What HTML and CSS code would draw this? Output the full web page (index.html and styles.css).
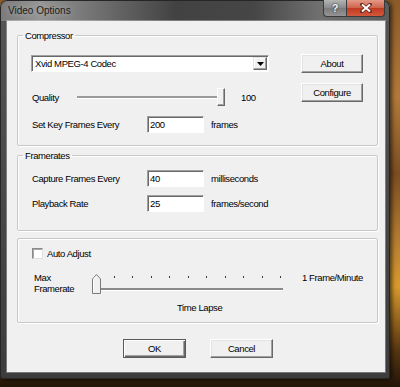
FILE: index.html
```html
<!DOCTYPE html>
<html lang="en">
<head>
  <meta charset="UTF-8">
  <meta name="viewport" content="width=device-width, initial-scale=1.0">
  <title>Video Options</title>
  <link rel="stylesheet" href="styles.css">
</head>
<body>
  <div class="window">
    <!-- Title bar -->
    <div class="titlebar">
      <span class="title">Video Options</span>
      <div class="caption-buttons">
        <span class="cap-btn cap-help">?</span>
        <span class="cap-btn cap-close">
          <svg width="12" height="10" viewBox="0 0 12 10">
            <path d="M2 1.5L10 8.5M10 1.5L2 8.5" stroke="#6a2a1c" stroke-width="3.6" stroke-linecap="square"/>
            <path d="M2 1.5L10 8.5M10 1.5L2 8.5" stroke="#fff" stroke-width="2"/>
          </svg>
        </span>
      </div>
    </div>

    <div class="client">
      <!-- Compressor -->
      <fieldset class="group">
        <legend>Compressor</legend>
        <div class="compressor">
          <div class="compressor-main">
            <div class="combo">
              <span class="combo-text">Xvid MPEG-4 Codec</span>
              <span class="combo-arrow">
                <svg width="7" height="4" viewBox="0 0 7 4"><path d="M0 0H7L3.5 4Z" fill="#000"/></svg>
              </span>
            </div>
            <div class="row row-quality">
              <span class="label label-quality">Quality</span>
              <div class="trackbar">
                <div class="groove"></div>
                <div class="thumb"></div>
              </div>
              <span class="value">100</span>
            </div>
            <div class="row row-field row-keyframes">
              <span class="label label-field">Set Key Frames Every</span>
              <input class="edit" type="text" value="200">
              <span class="unit">frames</span>
            </div>
          </div>
          <div class="compressor-buttons">
            <button class="btn" type="button">About</button>
            <button class="btn" type="button">Configure</button>
          </div>
        </div>
      </fieldset>

      <!-- Framerates -->
      <fieldset class="group group-rates">
        <legend>Framerates</legend>
        <div class="rates">
          <div class="row row-field">
            <span class="label label-field">Capture Frames Every</span>
            <input class="edit" type="text" value="40">
            <span class="unit">milliseconds</span>
          </div>
          <div class="row row-field">
            <span class="label label-field">Playback Rate</span>
            <input class="edit" type="text" value="25">
            <span class="unit">frames/second</span>
          </div>
        </div>
      </fieldset>

      <!-- Auto adjust -->
      <fieldset class="group group-adjust">
        <div class="adjust">
          <div class="check-row">
            <span class="check"></span>
            <span>Auto Adjust</span>
          </div>
          <div class="max-row">
            <div class="max-label">
              <div>Max</div>
              <div>Framerate</div>
            </div>
            <div class="slider">
              <div class="ticks">
                <span class="tick tick-first"></span>
                <span class="tick"></span>
                <span class="tick"></span>
                <span class="tick"></span>
                <span class="tick"></span>
                <span class="tick"></span>
                <span class="tick"></span>
                <span class="tick"></span>
                <span class="tick"></span>
                <span class="tick"></span>
                <span class="tick"></span>
              </div>
              <div class="slider-groove"></div>
              <svg class="slider-thumb" width="9" height="20" viewBox="0 0 9 20">
                <path d="M0.5 19.5V5L4.5 0.5L8.5 5V19.5Z" fill="#f0f0f0" stroke="#7a7a7a"/>
                <path d="M1.5 18.5V5.4L4.5 2" stroke="#fff" fill="none"/>
              </svg>
            </div>
            <span class="max-value">1 Frame/Minute</span>
          </div>
          <div class="lapse">Time Lapse</div>
        </div>
      </fieldset>

      <!-- Dialog buttons -->
      <div class="dialog-buttons">
        <button class="btn btn-default" type="button">OK</button>
        <button class="btn" type="button">Cancel</button>
      </div>
    </div>
  </div>
</body>
</html>
```

FILE: styles.css
```css
body {
  margin: 0;
  width: 400px;
  height: 387px;
  overflow: hidden;
  font-family: "Liberation Sans", Arial, sans-serif;
  font-size: 9.5px;
  letter-spacing: -0.4px;
  color: #000;
  background: linear-gradient(to bottom, #8a5a28 0%, #b27a3a 25%, #7a4e22 45%, #b47c30 62%, #d89a2c 74%, #5a3812 90%, #221508 100%);
}

.window {
  width: 390px;
  height: 379px;
  box-sizing: border-box;
  padding: 0 5px 7px 7px;
  display: flex;
  flex-direction: column;
  border-radius: 7px 7px 3px 3px;
  background:
    linear-gradient(to right, #7a7a7a 0%, #959595 10%, #707070 25%, #424242 45%, #464646 65%, #707070 82%, #5c5c5c 100%) top / 100% 21px no-repeat,
    linear-gradient(to bottom, #555, #3c3c3c);
  box-shadow: inset 0 0 0 1px #262626, 2px 1px 4px rgba(0, 0, 0, 0.6);
}

/* title bar */
.title {
  padding: 4px 0 0 1px;
  font-size: 10px;
  line-height: 13px;
  letter-spacing: 0;
  color: #1a1a1a;
  text-shadow: 0 0 6px rgba(255, 255, 255, 0.45);
}

.titlebar {
  height: 21px;
  display: flex;
  align-items: flex-start;
}

.caption-buttons {
  margin-left: auto;
  display: flex;
}

.cap-btn {
  height: 17px;
  box-sizing: border-box;
  display: flex;
  align-items: center;
  justify-content: center;
  border: 1px solid #3a3a3a;
  border-top: none;
}

.cap-help {
  width: 23px;
  border-radius: 0 0 0 4px;
  border-right: none;
  background: linear-gradient(to bottom, #b4b4b4, #8a8a8a 50%, #7a7a7a 51%, #959595);
  color: #f4f4f4;
  font-weight: bold;
  font-size: 11px;
  letter-spacing: 0;
  text-shadow: 0 0 2px #333, 0 0 1px #333;
}

.cap-close {
  width: 39px;
  border-radius: 0 0 4px 0;
  background: linear-gradient(to bottom, #e49a88, #d0624a 50%, #c03a22 51%, #d2583c);
}

/* client area */
.client {
  flex: 1;
  background: #f0f0f0;
  padding: 8px 7px 0 10px;
  box-shadow: 0 0 0 1px rgba(255, 255, 255, 0.3);
}

.group {
  margin: 0;
  padding: 0;
  min-width: 0;
  border: 1px solid #c8c8c8;
  border-radius: 2px;
  box-shadow: inset 1px 1px #fff, 1px 1px #fff;
}

.group legend {
  margin-left: 5px;
  padding: 0 2px;
  line-height: 13px;
}

.group-rates {
  margin-top: 3px;
}

.group-adjust {
  margin-top: 7px;
  height: 85px;
  box-sizing: border-box;
}

.row {
  display: flex;
  align-items: center;
}

.label-field {
  width: 116px;
}

.unit {
  margin-left: 7px;
}

.edit {
  width: 57px;
  height: 17px;
  box-sizing: border-box;
  margin: 0;
  padding: 0 2px;
  font: inherit;
  letter-spacing: inherit;
  color: #000;
  background: #fff;
  border: 1px solid;
  border-color: #a0a0a0 #fff #fff #a0a0a0;
  box-shadow: inset 1px 1px #696969;
  outline: none;
}

/* compressor group */
.compressor {
  height: 103px;
  box-sizing: border-box;
  display: flex;
  padding: 0 14px 0 13px;
}

.compressor-main {
  width: 238px;
  padding-top: 13px;
}

.combo {
  height: 17px;
  box-sizing: border-box;
  display: flex;
  align-items: center;
  background: #fff;
  border: 1px solid;
  border-color: #a0a0a0 #fff #fff #a0a0a0;
  box-shadow: inset 1px 1px #696969;
  padding: 1px 1px 1px 3px;
}

.combo-text {
  flex: 1;
}

.combo-arrow {
  width: 14px;
  height: 13px;
  box-sizing: border-box;
  display: flex;
  align-items: center;
  justify-content: center;
  background: #f0f0f0;
  border: 1px solid;
  border-color: #e3e3e3 #696969 #696969 #e3e3e3;
  box-shadow: inset -1px -1px #a0a0a0, inset 1px 1px #fff;
}

.row-quality {
  margin-top: 16px;
  height: 18px;
}

.label-quality {
  width: 46px;
  padding-left: 1px;
  box-sizing: border-box;
}

.trackbar {
  width: 148px;
  height: 18px;
  display: flex;
  align-items: center;
}

.groove {
  flex: 1;
  height: 2px;
  background: #9a9a9a;
  box-shadow: 0 1px #fff;
}

.thumb {
  width: 8px;
  height: 18px;
  box-sizing: border-box;
  background: #f0f0f0;
  border: 1px solid;
  border-color: #fff #696969 #696969 #fff;
  box-shadow: inset -1px -1px #a0a0a0;
}

.value {
  margin-left: 16px;
}

.row-keyframes {
  margin-top: 10px;
}

.row-field .label-field {
  padding-left: 1px;
  box-sizing: border-box;
}

.compressor-buttons {
  margin-left: auto;
  padding-top: 12px;
  display: flex;
  flex-direction: column;
  gap: 10px;
}

.btn {
  width: 62px;
  height: 19px;
  box-sizing: border-box;
  margin: 0;
  padding: 0;
  font: inherit;
  letter-spacing: inherit;
  color: #000;
  background: #f0f0f0;
  border: 1px solid;
  border-color: #fff #696969 #696969 #fff;
  box-shadow: inset -1px -1px #a0a0a0, inset 1px 1px #e3e3e3;
}

.btn-default {
  border-color: #5a5a5a;
  box-shadow: inset 1px 1px #fff, inset -1px -1px #696969, inset -2px -2px #a0a0a0;
}

/* framerates group */
.rates {
  height: 68px;
  box-sizing: border-box;
  padding: 8px 0 0 13px;
  display: flex;
  flex-direction: column;
  gap: 8px;
}

/* auto adjust group */
.adjust {
  padding: 9px 0 0 14px;
}

.check-row {
  height: 11px;
  display: flex;
  align-items: center;
  gap: 4px;
}

.check {
  width: 11px;
  height: 11px;
  box-sizing: border-box;
  background: #fff;
  border: 1px solid;
  border-color: #8a8a8a #e0e0e0 #e0e0e0 #8a8a8a;
  box-shadow: inset 1px 1px #a8a8a8;
}

.max-row {
  margin-top: 13px;
  display: flex;
  align-items: flex-start;
}

.max-label {
  width: 60px;
  padding-left: 2px;
  box-sizing: border-box;
  line-height: 11px;
}

.slider {
  position: relative;
  width: 193px;
  height: 22px;
}

.ticks {
  display: flex;
  justify-content: space-between;
  align-items: flex-end;
  padding: 0 4px 0 3px;
  margin-top: 3px;
  height: 3px;
}

.tick {
  width: 1px;
  height: 2px;
  background: #3a3a3a;
}

.tick-first {
  height: 3px;
}

.slider-groove {
  margin: 10px 2px 0 5px;
  height: 2px;
  background: #8a8a8a;
  box-shadow: 0 1px #fff;
}

.slider-thumb {
  position: absolute;
  left: 0;
  top: 2px;
}

.max-value {
  margin-left: 17px;
  line-height: 11px;
}

.lapse {
  margin: 8px 0 0 145px;
  line-height: 11px;
}

/* OK / Cancel */
.dialog-buttons {
  margin-top: 16px;
  display: flex;
  justify-content: center;
  gap: 24px;
  padding-left: 1px;
}

.dialog-buttons .btn {
  width: 63px;
}
```
